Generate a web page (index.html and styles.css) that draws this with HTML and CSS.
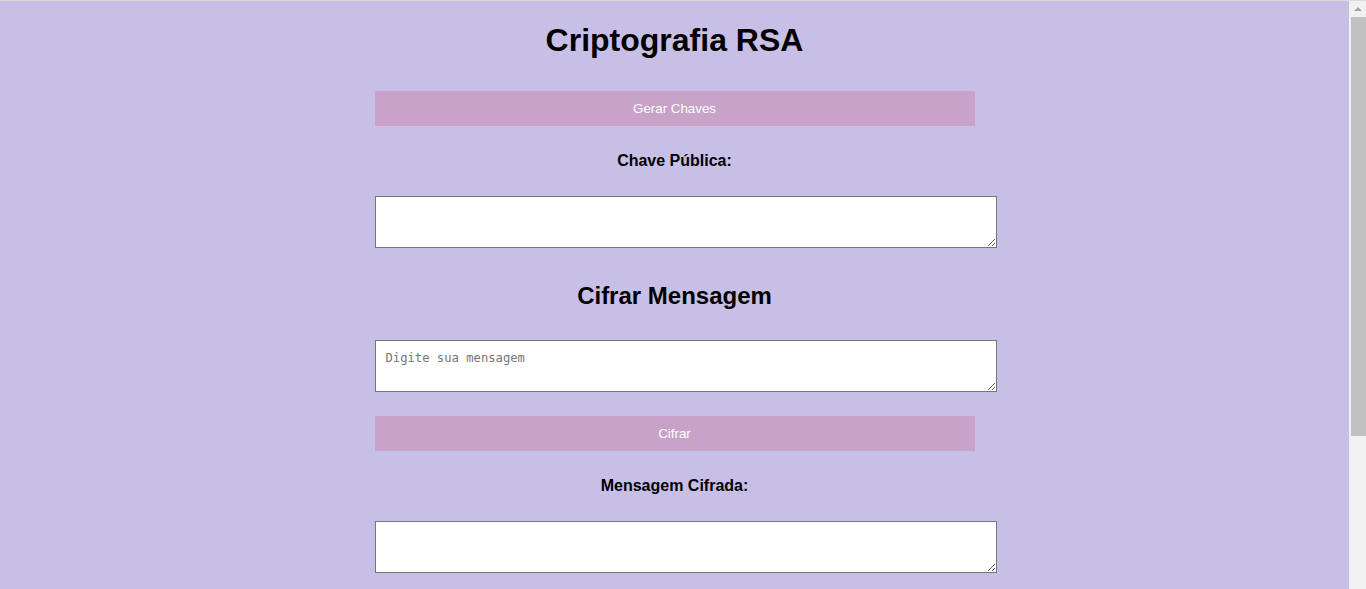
FILE: index.html
```html
<!DOCTYPE html>
<html lang="pt-BR">
<head>
<meta charset="utf-8">
<title>Criptografia RSA</title>
<link rel="stylesheet" href="styles.css">
</head>
<body>
  <div class="window">
    <div class="viewport">
      <main class="container">
        <h1 class="title">Criptografia RSA</h1>
        <button class="btn" type="button">Gerar Chaves</button>
        <label class="field-label" for="pub">Chave Pública:</label>
        <textarea id="pub" class="box" rows="2"></textarea>

        <h2 class="section-title">Cifrar Mensagem</h2>
        <textarea class="box" rows="2" placeholder="Digite sua mensagem"></textarea>
        <button class="btn" type="button">Cifrar</button>
        <label class="field-label" for="enc">Mensagem Cifrada:</label>
        <textarea id="enc" class="box" rows="2"></textarea>
      </main>
    </div>
    <div class="scrollbar" aria-hidden="true">
      <div class="scroll-arrow"></div>
      <div class="scroll-thumb"></div>
    </div>
  </div>
</body>
</html>
```
FILE: styles.css
```css
html, body {
  margin: 0;
  padding: 0;
  height: 100%;
  overflow: hidden;
}

body {
  background: #c8bfe7;
  color: #000;
  font-family: "Liberation Sans", Arial, sans-serif;
  font-size: 16px;
}

.window {
  display: flex;
  height: 100vh;
  border-top: 1px solid #dadada;
  box-sizing: border-box;
}

.viewport {
  flex: 1;
  min-width: 0;
  overflow: hidden;
}

.container {
  width: 600px;
  margin: 0 auto;
  display: flex;
  flex-direction: column;
  align-items: flex-start;
  text-align: center;
}

.title {
  align-self: stretch;
  margin: 21px 0 0;
  font-size: 32px;
  line-height: 37px;
  font-weight: bold;
}

.btn {
  width: 100%;
  margin: 32px 0 0;
  padding: 10px;
  border: none;
  background: #c8a2c8;
  color: #fff;
  font-family: "Liberation Sans", Arial, sans-serif;
  font-size: 13.333px;
  line-height: 15px;
  cursor: pointer;
}

.box + .btn {
  margin-top: 24px;
}

.field-label {
  align-self: stretch;
  display: block;
  margin: 25px 0;
  font-weight: bold;
  font-size: 16px;
  line-height: 20px;
}

.box {
  display: block;
  width: 100%;
  height: 30px;
  margin: 0;
  padding: 10px;
  border: 1px solid #767676;
  background: #fff;
  font-family: "DejaVu Sans Mono", "Liberation Mono", monospace;
  font-size: 12.2px;
  line-height: 15px;
  color: #000;
}

.box::placeholder {
  color: #757575;
}

.section-title {
  align-self: stretch;
  margin: 34px 0 30px;
  font-size: 24px;
  line-height: 28px;
  font-weight: bold;
}

.scrollbar {
  width: 17px;
  flex: none;
  background: #f1f1f1;
  display: flex;
  flex-direction: column;
  align-items: center;
}

.scroll-arrow {
  width: 0;
  height: 0;
  margin-top: 6px;
  border-left: 4px solid transparent;
  border-right: 4px solid transparent;
  border-bottom: 4px solid #a3a3a3;
}

.scroll-thumb {
  width: 15px;
  height: 419px;
  margin-top: 6px;
  margin-left: 2px;
  background: #c1c1c1;
}
```
